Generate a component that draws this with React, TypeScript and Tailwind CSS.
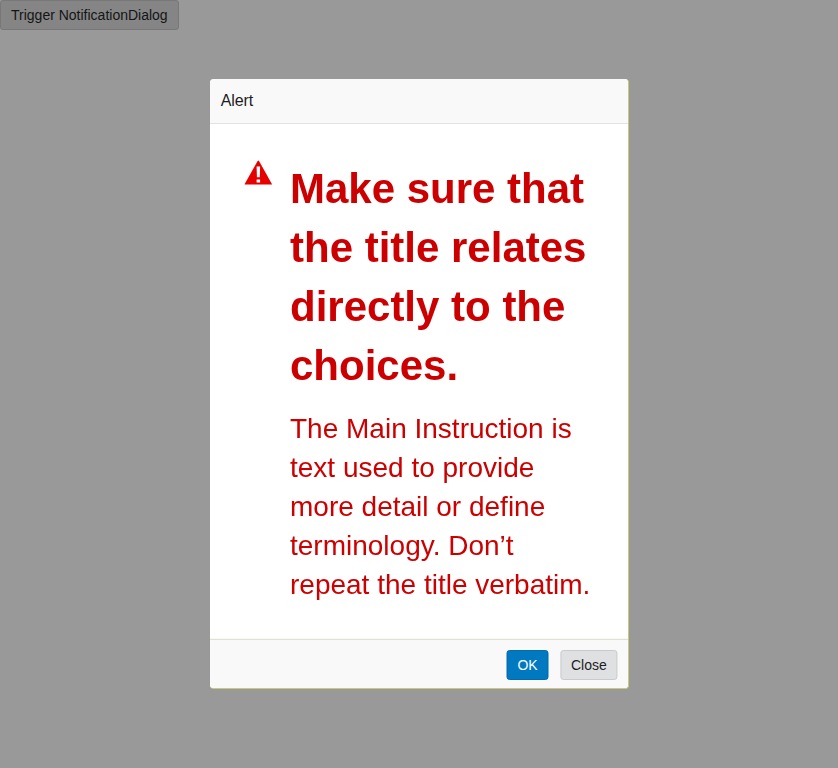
import React from 'react';

export default function App() {
  return (
    <div className="min-h-screen bg-[#999999] font-['Liberation_Sans',Arial,sans-serif] text-sm leading-5 text-[#1d1d1f]">
      <button className="block h-[30px] rounded-[3px] border border-[#787878] bg-[#858585] px-[10px] text-[#141516]">
        Trigger NotificationDialog
      </button>
      <div className="fixed inset-0 flex items-center justify-center pl-px">
        <div className="flex h-[610px] w-[419px] flex-col overflow-hidden rounded-[4px] border-r border-b border-[#c9c97c] bg-white" role="dialog">
          <header className="flex h-[45px] shrink-0 items-center border-b border-[#e2e2e2] bg-[#f9f9f9] px-[10.75px] pb-px text-base tracking-[-0.1px]">
            Alert
          </header>
          <main className="flex flex-1 items-start border-b border-[#fafae8] pt-[35px] pl-[34px] text-[#cc0000]">
            <svg className="mt-px h-[25px] w-[28px] shrink-0" viewBox="0 0 28 25">
              <path d="M13.6 0.9 Q14.3 0 15 0.9 L27.9 23.9 V24.5 H0.7 V23.9 Z" fill="#e60000" />
              <path d="M12.6 6.5h3.5l-.3 10.8h-2.9zM12.6 19.5h3.5v3h-3.5z" fill="white" />
            </svg>
            <div className="ml-[18px] w-[304px]">
              <h1 className="text-[42px] leading-[59px] font-bold">Make sure that the title relates directly to the choices.</h1>
              <p className="mt-[14px] text-[28px] leading-[39px]">The Main Instruction is text used to provide more detail or define terminology. Don’t repeat the title verbatim.</p>
            </div>
          </main>
          <footer className="flex h-[49px] shrink-0 items-center justify-end gap-3 border-t border-[#e0e0e0] bg-[#f9f9f9] pt-px pr-[11px]">
            <button className="h-[30px] w-[42px] translate-x-[0.5px] rounded-[3px] border border-[#006bad] bg-[#0079c1] text-white">OK</button>
            <button className="h-[30px] w-[57px] translate-x-[0.4px] rounded-[3px] border border-[#c9cacb] bg-[#dfe0e1]">Close</button>
          </footer>
        </div>
      </div>
    </div>
  );
}
